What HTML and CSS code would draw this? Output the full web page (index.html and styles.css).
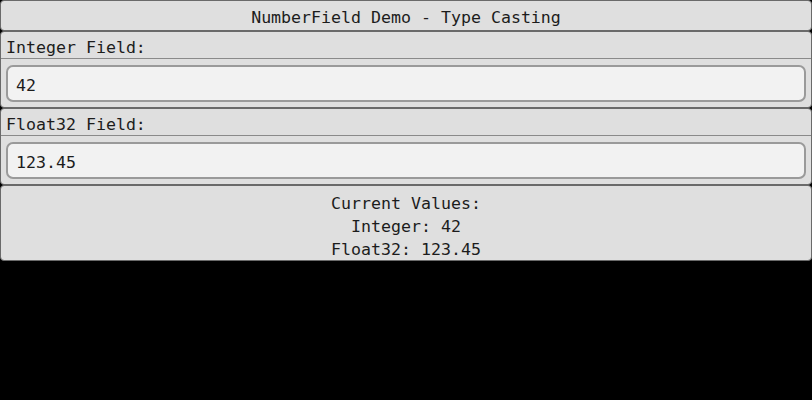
FILE: index.html
```html
<!DOCTYPE html>
<html>
<head>
<meta charset="utf-8">
<link rel="stylesheet" href="styles.css">
</head>
<body>
<div class="app">
  <div class="panel title">NumberField Demo - Type Casting</div>
  <div class="panel field">
    <div class="label">Integer Field:</div>
    <div class="input-wrap"><div class="input">42</div></div>
  </div>
  <div class="panel field">
    <div class="label">Float32 Field:</div>
    <div class="input-wrap"><div class="input">123.45</div></div>
  </div>
  <div class="panel values">
    <div>Current Values:</div>
    <div>Integer: 42</div>
    <div>Float32: 123.45</div>
  </div>
</div>
</body>
</html>
```
FILE: styles.css
```css
html, body {
  margin: 0;
  padding: 0;
  background: #000;
}
body {
  width: 812px;
  height: 400px;
  overflow: hidden;
  font-family: "DejaVu Sans Mono", "Liberation Mono", monospace;
  font-size: 16.6px;
  color: #1c1c1c;
}
.app {
  display: flex;
  flex-direction: column;
}
.panel {
  background: #dfdfdf;
  border: 1px solid #6a6a6a;
  border-radius: 4px;
}
.title {
  height: 29px;
  line-height: 33px;
  text-align: center;
}
.field {
  display: flex;
  flex-direction: column;
}
.label {
  height: 26px;
  line-height: 31px;
  padding-left: 5px;
  border-bottom: 1px solid #8a8a8a;
}
.input-wrap {
  padding: 6px 5px 5px 5px;
}
.input {
  height: 33px;
  line-height: 38px;
  padding-left: 8px;
  background: #f2f2f2;
  border: 2px solid #9a9a9a;
  border-radius: 7px;
}
.values {
  padding: 6px 0 0 0;
  height: 68px;
  text-align: center;
  line-height: 23px;
}
```
